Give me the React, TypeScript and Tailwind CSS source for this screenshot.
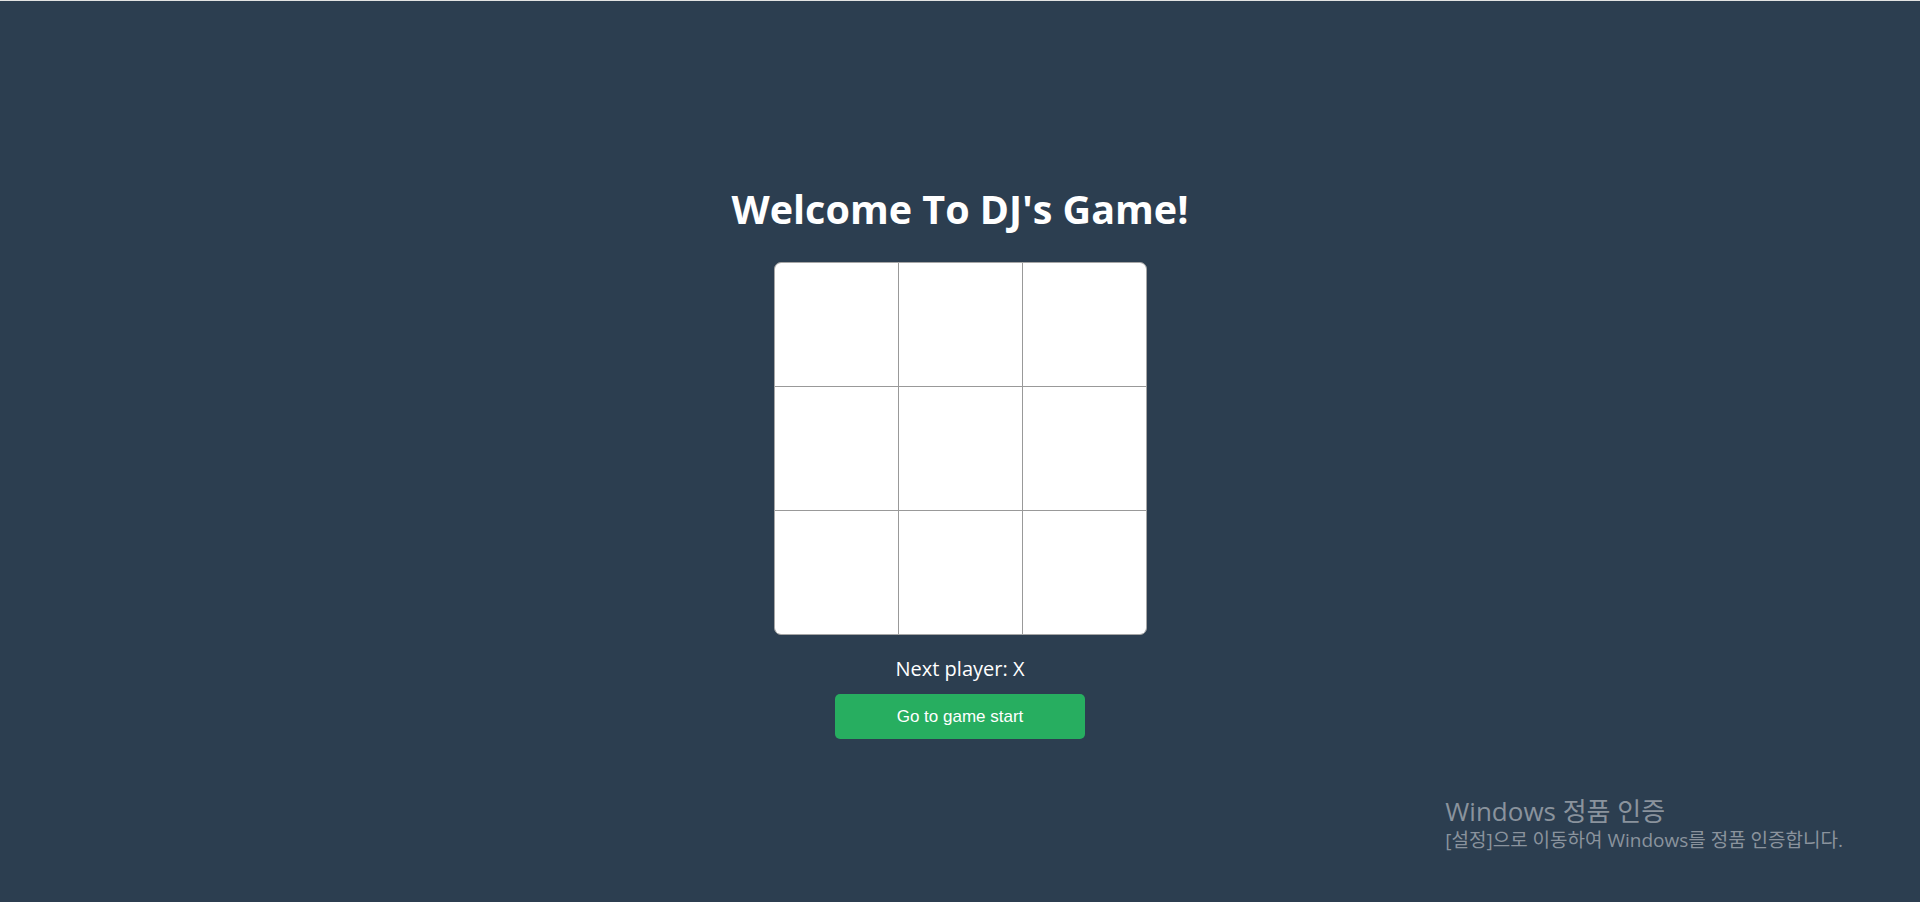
import { useState } from "react";

export default function App() {
  const [squares, setSquares] = useState<(string | null)[]>(Array(9).fill(null));
  const [xIsNext, setXIsNext] = useState(true);

  const handleClick = (i: number) => {
    if (squares[i]) return;
    const next = squares.slice();
    next[i] = xIsNext ? "X" : "O";
    setSquares(next);
    setXIsNext(!xIsNext);
  };

  const reset = () => {
    setSquares(Array(9).fill(null));
    setXIsNext(true);
  };

  return (
    <div className="relative min-h-screen bg-[#2c3e50] border-t border-[#e3e3e3] font-['Open_Sans','Noto_Sans_CJK_KR',sans-serif]">
      <div className="flex flex-col items-center pt-[181px]">
        <h1 className="text-[39.5px] font-bold text-white leading-[54px]">Welcome To DJ's Game!</h1>
        <div className="mt-[26px] grid grid-cols-[123px_123px_123px] gap-px bg-[#999] border border-[#a6a6a6] rounded-[7px] overflow-hidden">
          {squares.map((v, i) => (
            <button
              key={i}
              onClick={() => handleClick(i)}
              className="w-[123px] h-[123px] bg-white text-5xl font-bold text-[#2c3e50] flex items-center justify-center"
            >
              {v}
            </button>
          ))}
        </div>
        <p className="mt-[20px] text-[20px] leading-[27px] text-white">Next player: {xIsNext ? "X" : "O"}</p>
        <button
          onClick={reset}
          className="mt-[12px] w-[250px] h-[45px] rounded-[5px] bg-[#27ae60] text-white text-[17px] font-['Liberation_Sans',Arial,sans-serif] hover:bg-[#229954]"
        >
          Go to game start
        </button>
      </div>

      <div className="absolute right-[77px] bottom-[49px] text-[#8a939d] pointer-events-none">
        <div className="text-[26px] leading-[34px]">Windows 정품 인증</div>
        <div className="text-[19px] leading-[25px]">[설정]으로 이동하여 Windows를 정품 인증합니다.</div>
      </div>
    </div>
  );
}
